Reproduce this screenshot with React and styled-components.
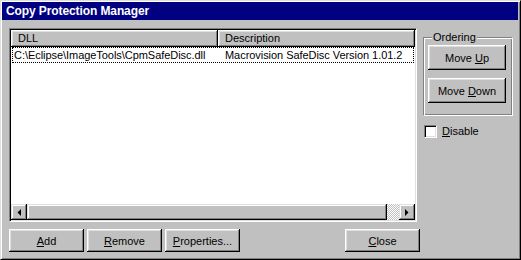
import React from "react";
import styled, { createGlobalStyle } from "styled-components";

const GlobalStyle = createGlobalStyle`
  html, body {
    margin: 0;
    padding: 0;
    background: #c0c0c0;
  }
  body {
    font-family: "Liberation Sans", Arial, sans-serif;
    font-size: 11px;
    color: #000;
  }
`;

const raised = `
  box-shadow: inset -1px -1px 0 #000, inset 1px 1px 0 #fff,
    inset -2px -2px 0 #808080, inset 2px 2px 0 #dfdfdf;
`;

const Window = styled.div`
  width: 521px;
  height: 260px;
  box-sizing: border-box;
  background: #c0c0c0;
  border: 1px solid;
  border-color: #dfdfdf #000 #000 #dfdfdf;
  box-shadow: inset 1px 1px 0 #fff, inset -1px -1px 0 #808080;
  padding: 1px 2px 2px 1px;
  display: flex;
  flex-direction: column;
`;

const TitleBar = styled.div`
  height: 18px;
  background: #000080;
  color: #fff;
  font-weight: bold;
  font-size: 12px;
  line-height: 18px;
  padding-left: 4px;
  letter-spacing: -0.1px;
`;

const Body = styled.div`
  display: flex;
  padding: 8px 0 0 7px;
`;

const LeftColumn = styled.div`
  width: 411px;
  display: flex;
  flex-direction: column;
  gap: 7px;
`;

const ListBox = styled.div`
  width: 408px;
  height: 194px;
  box-sizing: border-box;
  background: #fff;
  border: 1px solid;
  border-color: #808080 #fff #fff #808080;
  box-shadow: inset 1px 1px 0 #000, inset -1px -1px 0 #dfdfdf;
  padding: 1px;
  display: flex;
  flex-direction: column;
`;

const HeaderRow = styled.div`
  display: flex;
  height: 17px;
`;

const HeaderCell = styled.div`
  width: ${(p) => p.$w}px;
  box-sizing: border-box;
  background: #c0c0c0;
  ${raised}
  padding-left: 7px;
  line-height: 16px;
  white-space: nowrap;
  overflow: hidden;
`;

const Row = styled.div`
  display: flex;
  height: 16px;
  box-sizing: border-box;
  margin: 0 1px;
  border: 1px dotted #000;
  line-height: 14px;
`;

const Cell = styled.div`
  width: ${(p) => p.$w}px;
  box-sizing: border-box;
  padding-left: ${(p) => p.$pad}px;
  white-space: nowrap;
  overflow: hidden;
  letter-spacing: -0.05px;
`;

const ScrollBar = styled.div`
  margin-top: auto;
  height: 16px;
  display: flex;
`;

const ScrollButton = styled.div`
  width: 16px;
  height: 16px;
  box-sizing: border-box;
  background: #c0c0c0;
  box-shadow: inset -1px -1px 0 #000, inset 1px 1px 0 #dfdfdf,
    inset -2px -2px 0 #808080, inset 2px 2px 0 #fff;
  display: flex;
  align-items: center;
  justify-content: center;
`;

const Thumb = styled(ScrollButton)`
  width: 360px;
`;

const Track = styled.div`
  flex: 1;
  background: repeating-conic-gradient(#fff 0 25%, #c0c0c0 0 50%) 0 0 / 2px 2px;
`;

const ButtonRow = styled.div`
  display: flex;
  gap: 3px;
`;

const Button = styled.button`
  width: ${(p) => p.$w || 75}px;
  height: ${(p) => p.$h || 23}px;
  margin-left: ${(p) => (p.$push ? "auto" : "0")};
  padding: 0;
  border: none;
  background: #c0c0c0;
  ${raised}
  font-family: "Liberation Sans", Arial, sans-serif;
  font-size: 11px;
  color: #000;
`;

const Key = styled.span`
  text-decoration: underline;
  text-underline-offset: 1px;
`;

const RightColumn = styled.div`
  margin-left: 3px;
  display: flex;
  flex-direction: column;
`;

const Group = styled.fieldset`
  width: 90px;
  box-sizing: border-box;
  margin: 2px 0 0;
  padding: 1px 4px 12px;
  border: 1px solid;
  border-color: #808080 #fff #fff #808080;
  box-shadow: inset 1px 1px 0 #fff, inset -1px -1px 0 #808080;
  display: flex;
  flex-direction: column;
  gap: 8px;
`;

const Legend = styled.legend`
  padding: 0 1px;
  margin-left: 4px;
  line-height: 14px;
  background: #c0c0c0;
`;

const CheckRow = styled.label`
  display: flex;
  align-items: center;
  gap: 5px;
  margin: 9px 0 0 1px;
  line-height: 13px;
`;

const CheckBox = styled.span`
  width: 13px;
  height: 13px;
  box-sizing: border-box;
  background: #fff;
  border: 1px solid;
  border-color: #808080 #fff #fff #808080;
  box-shadow: inset 1px 1px 0 #000, inset -1px -1px 0 #dfdfdf;
`;

const Arrow = ({ dir }) => (
  <svg width="4" height="7" viewBox="0 0 4 7">
    {dir === "left" ? (
      <polygon points="4,0 4,7 0.5,3.5" fill="#000" />
    ) : (
      <polygon points="0,0 0,7 3.5,3.5" fill="#000" />
    )}
  </svg>
);

export default function App() {
  return (
    <>
      <GlobalStyle />
      <Window>
        <TitleBar>Copy Protection Manager</TitleBar>
        <Body>
          <LeftColumn>
            <ListBox>
              <HeaderRow>
                <HeaderCell $w={207}>DLL</HeaderCell>
                <HeaderCell $w={197}>Description</HeaderCell>
              </HeaderRow>
              <Row>
                <Cell $w={206} $pad={1}>
                  C:\Eclipse\ImageTools\CpmSafeDisc.dll
                </Cell>
                <Cell $w={190} $pad={6}>
                  Macrovision SafeDisc Version 1.01.2
                </Cell>
              </Row>
              <ScrollBar>
                <ScrollButton>
                  <Arrow dir="left" />
                </ScrollButton>
                <Thumb />
                <Track />
                <ScrollButton>
                  <Arrow dir="right" />
                </ScrollButton>
              </ScrollBar>
            </ListBox>
            <ButtonRow>
              <Button>
                <Key>A</Key>dd
              </Button>
              <Button>
                <Key>R</Key>emove
              </Button>
              <Button>
                <Key>P</Key>roperties...
              </Button>
              <Button $push>
                <Key>C</Key>lose
              </Button>
            </ButtonRow>
          </LeftColumn>
          <RightColumn>
            <Group>
              <Legend>Ordering</Legend>
              <Button $w={78} $h={25}>
                Move <Key>U</Key>p
              </Button>
              <Button $w={78} $h={25}>
                Move <Key>D</Key>own
              </Button>
            </Group>
            <CheckRow>
              <CheckBox />
              <span>
                <Key>D</Key>isable
              </span>
            </CheckRow>
          </RightColumn>
        </Body>
      </Window>
    </>
  );
}
